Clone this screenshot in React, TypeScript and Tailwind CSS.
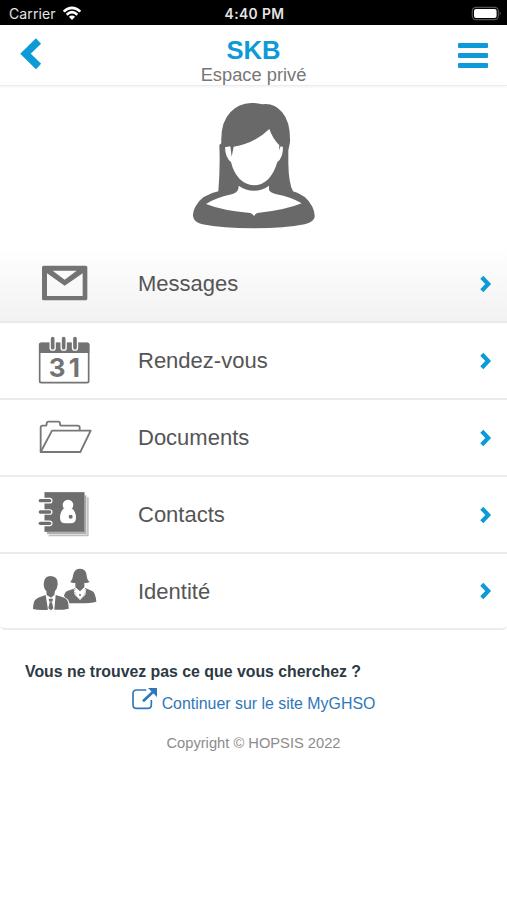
import type { ReactNode } from 'react';

interface MenuItem {
  label: string;
  icon: ReactNode;
}

function MailIcon() {
  return (
    <svg className="-mt-[2px] h-[76px] w-[72px]" viewBox="30 -15 216 228" fill="#737373">
      <path
        fillRule="evenodd"
        d="M72 47H197Q202 47 202 52V146Q202 151 197 151H71Q66 151 66 146V52Q66 47 71 47ZM81 70V138H188V70L134 107ZM98 62L134 89L170 62Z"
      />
    </svg>
  );
}

function CalendarIcon() {
  return (
    <svg className="-mt-[2px] h-[76px] w-[72px]" viewBox="30 -9 216 228">
      <rect x="59" y="55" width="147" height="118" rx="5" fill="#fff" stroke="#737373" strokeWidth="5" />
      <path d="M57 84V58Q57 53 62 53H203Q208 53 208 58V84Z" fill="#737373" />
      {[98, 131, 165].map((x) => (
        <g key={x} strokeLinecap="round">
          <path d={`M${x} 53V68`} stroke="#fff" strokeWidth="19" />
          <path d={`M${x} 41V68`} stroke="#737373" strokeWidth="11" />
        </g>
      ))}
      <text
        x="133"
        y="156"
        textAnchor="middle"
        textLength="94"
        className="font-['Inter',sans-serif] text-[78px] font-bold"
        fill="#737373"
      >
        31
      </text>
    </svg>
  );
}

function FolderIcon() {
  return (
    <svg
      className="-mt-[2px] h-[76px] w-[72px]"
      viewBox="30 222 216 228"
      fill="none"
      stroke="#777"
      strokeWidth="5.5"
      strokeLinejoin="round"
    >
      <path d="M62 381V308Q62 302 68 302H76Q80 302 80 296Q80 290 86 290H115Q120 290 120 296Q120 302 125 302H173Q179 302 179 307V316" />
      <path d="M62 381L96 317H212L181 381Z" />
    </svg>
  );
}

function ContactsIcon() {
  return (
    <svg className="-mt-[2px] h-[76px] w-[72px]" viewBox="30 -12 216 228">
      <path d="M86 52H206V169H86Z" fill="#bdbdbd" />
      <path d="M80 45H200V163H80Z" fill="#a5a5a5" stroke="#fff" strokeWidth="2" />
      <path d="M73 36H194V156H73Z" fill="#6e6e6e" stroke="#eee" strokeWidth="1" />
      {[62, 96, 130].map((y) => (
        <g key={y} strokeLinecap="round">
          <path d={`M73 ${y}H89`} stroke="#fff" strokeWidth="17" />
          <path d={`M61 ${y}H89`} stroke="#6e6e6e" strokeWidth="10" />
        </g>
      ))}
      <circle cx="144" cy="75" r="16" fill="#fff" />
      <path
        d="M132 85Q144 94 155 85Q168 95 168 113Q168 130 152 130H136Q120 130 120 113Q120 95 132 85Z"
        fill="#fff"
      />
      <circle cx="152" cy="110" r="6" fill="#6e6e6e" />
    </svg>
  );
}

function IdentityIcon() {
  return (
    <svg className="-mt-px h-[76px] w-[72px]" viewBox="30 219 216 228" fill="#6e6e6e">
      <path d="M179 266Q196 266 199 281L201 293Q202 301 209 306Q198 311 193 308V322L180 334L166 322V308Q158 310 151 306Q158 299 159 288Q161 267 179 266Z" />
      <path d="M165 325L180 360L196 324L218 334Q226 338 229 365Q213 370 177 370H148Q146 356 136 353L132 348Q134 336 142 333Z" />
      <path d="M161 327L168 329L180 338L192 329L199 327L196 344L180 360L164 344Z" fill="#fff" />
      <path d="M163 330L170 350L180 358L190 350L197 330" fill="none" stroke="#999" strokeWidth="2" strokeDasharray="3 3" />
      <circle cx="180" cy="345" r="3" />
      <path d="M92 288Q115 289 113 314Q111 327 105 333L103 345L93 353L80 345L79 333Q71 326 71 311Q72 289 92 288Z" />
      <path d="M77 345L62 350Q45 355 42 366Q39 376 39 387Q58 391 84 389ZM107 345L129 352Q141 356 144 366Q146 376 146 386Q124 391 103 389Z" />
      <path d="M86 356H99L97 365H88ZM89 367H96L100 385L93 391L85 385Z" />
    </svg>
  );
}

const items: MenuItem[] = [
  { label: 'Messages', icon: <MailIcon /> },
  { label: 'Rendez-vous', icon: <CalendarIcon /> },
  { label: 'Documents', icon: <FolderIcon /> },
  { label: 'Contacts', icon: <ContactsIcon /> },
  { label: 'Identité', icon: <IdentityIcon /> },
];

function StatusBar() {
  return (
    <div className="grid h-[25px] grid-cols-[1fr_auto_1fr] items-center bg-black pt-[3px] pl-[9px] pr-[7px] font-['Inter',sans-serif] text-[#e4e4e4]">
      <div className="flex items-center gap-[6px]">
        <span className="text-[14px] leading-none tracking-[0.1px]">Carrier</span>
        <svg className="-mt-[2px] h-[15px] w-[20px]" viewBox="0 0 20 15" fill="none" stroke="#fff" strokeWidth="2.6">
          <path d="M1.7 5.6Q10 -2 18.3 5.6M4.7 8.7Q10 3.7 15.3 8.7" />
          <path d="M10 14L6.9 10.8Q10 8.4 13.1 10.8Z" fill="#fff" stroke="none" />
        </svg>
      </div>
      <span className="pt-px text-center text-[13.8px] leading-none font-semibold tracking-[0.4px]">4:40 PM</span>
      <svg className="-mt-[2px] -mr-[2px] h-[15px] w-[31px] justify-self-end" viewBox="0 0 31 15">
        <rect x="1.3" y="1.3" width="26" height="12.4" rx="3.6" fill="none" stroke="#555" strokeWidth="1.2" />
        <rect x="3" y="3" width="22.6" height="9" rx="2" fill="#fff" />
        <path d="M28.6 5Q30.8 7.5 28.6 10Z" fill="#555" />
      </svg>
    </div>
  );
}

function Header() {
  return (
    <header className="flex h-[61px] items-start justify-between border-b border-[#ececec] px-[19px] shadow-[0_1px_3px_rgba(0,0,0,0.06)]">
      <svg className="mt-[12px] h-[33px] w-[24px]" viewBox="0 0 24 33">
        <path d="M19.5 4L6.5 16.7L19.5 29.5" fill="none" stroke="#0c9ad8" strokeWidth="7.4" />
      </svg>
      <div className="flex flex-col items-center pl-[6px]">
        <h1 className="mt-[11px] text-[25.6px] leading-[29px] font-bold text-[#0c9ad8]">SKB</h1>
        <p className="text-[18.3px] leading-[20px] text-[#777]">Espace privé</p>
      </div>
      <div className="mt-[18px] flex w-[30px] flex-col gap-[5px]">
        <span className="h-[5px] rounded-[1px] bg-[#0c9ad8]" />
        <span className="h-[5px] rounded-[1px] bg-[#0c9ad8]" />
        <span className="h-[5px] rounded-[1px] bg-[#0c9ad8]" />
      </div>
    </header>
  );
}

function Avatar() {
  return (
    <svg className="h-[128px] w-[124px]" viewBox="36 36 372 384">
      <path
        d="M124 160Q121 98 151 67Q175 40 214 39Q232 38 247 43Q282 38 306 66Q332 96 330 157L325 181V220Q326 280 339 304Q378 314 397 350Q405 366 404 381Q401 397 374 403Q315 415 221 415Q126 415 67 403Q41 397 39 378Q38 365 46 350Q65 314 115 304Q121 230 118 165Z"
        fill="#696969"
      />
      <path
        d="M161 170Q223 161 268 117Q277 144 298 166L297 181L302 169L309 171Q309 204 292 216Q282 251 263 269Q244 286 221 286Q198 285 179 267Q160 247 153 216Q136 204 135 172L151 169L155 200Z"
        fill="#fff"
      />
      <path
        d="M176 287Q197 302 222 302Q247 302 267 287V298Q268 307 286 312Q337 322 365 340Q314 361 232 369Q227 371 222 378Q217 371 211 369Q128 362 78 342Q106 323 158 312Q177 307 176 287Z"
        fill="#fff"
      />
    </svg>
  );
}

function MenuRow({ label, icon }: MenuItem) {
  return (
    <li className="flex h-[77px] items-center border-b-2 border-[#ebebeb] pr-[14px] pl-[30px] first:bg-linear-to-b first:from-white first:to-[#f2f2f2] last:h-[76px] last:rounded-b-[5px]">
      {icon}
      <span className="ml-[36px] flex-1 pt-px text-[22px] leading-none text-[#555]">{label}</span>
      <svg className="h-[20px] w-[15px]" viewBox="0 0 15 20">
        <path d="M3.8 3.2L10.2 10L3.8 16.8" fill="none" stroke="#0c9ad8" strokeWidth="4.2" />
      </svg>
    </li>
  );
}

export default function App() {
  return (
    <div className="flex h-[900px] w-[507px] flex-col overflow-hidden bg-white font-['Liberation_Sans',Arial,sans-serif]">
      <StatusBar />
      <Header />
      <div className="flex h-[160px] justify-center pt-[16px]">
        <Avatar />
      </div>
      <ul>
        {items.map((item) => (
          <MenuRow key={item.label} {...item} />
        ))}
      </ul>
      <footer className="flex flex-col items-center">
        <p className="mt-[32px] self-start pl-[25px] text-[15.85px] leading-[20px] font-bold text-[#2d3a45]">
          Vous ne trouvez pas ce que vous cherchez ?
        </p>
        <a className="mt-[5px] flex items-start gap-[4px] text-[15.9px] text-[#2f77b8]" href="#">
          <svg className="h-[24px] w-[26px]" viewBox="396 261 78 72" fill="none" stroke="#2f77b8">
            <path d="M439 270H410Q399 270 399 281V314Q399 325 410 325H443Q454 325 454 314V300" strokeWidth="5" />
            <path d="M429 304L462 273" strokeWidth="8" />
            <path d="M444 264H471V291Z" fill="#2f77b8" stroke="none" />
          </svg>
          <span className="pt-[7px] leading-[20px]">Continuer sur le site MyGHSO</span>
        </a>
        <p className="mt-[20px] text-[14.7px] leading-[18px] text-[#8c8c8c]">Copyright © HOPSIS 2022</p>
      </footer>
    </div>
  );
}
